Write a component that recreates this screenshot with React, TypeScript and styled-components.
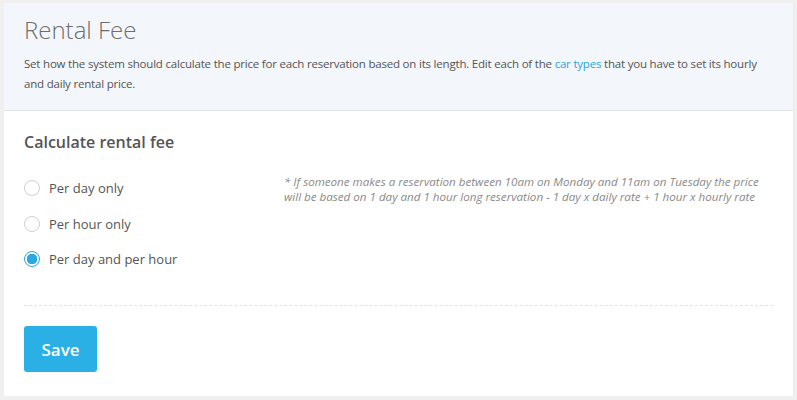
import React, { useState } from 'react';
import styled, { createGlobalStyle } from 'styled-components';

const GlobalStyle = createGlobalStyle`
  html, body {
    margin: 0;
    padding: 0;
    background: #f0f0f0;
  }
  body {
    font-family: 'Open Sans', 'Noto Sans', sans-serif;
    color: #555555;
  }
  * { box-sizing: border-box; }
`;

const options = [
  { id: 'day', label: 'Per day only' },
  { id: 'hour', label: 'Per hour only' },
  { id: 'both', label: 'Per day and per hour' },
];

const App = () => {
  const [mode, setMode] = useState('both');

  return (
    <>
      <GlobalStyle />
      <Page>
        <Card>
          <Header>
            <Title>Rental Fee</Title>
            <Description>
              Set how the system should calculate the price for each reservation based on its length. Edit each of
              the <Link href='#'>car types</Link> that you have to set its hourly and daily rental price.
            </Description>
          </Header>
          <Body>
            <SectionTitle>Calculate rental fee</SectionTitle>
            <OptionsRow>
              <RadioList>
                {options.map((o) => (
                  <RadioLabel key={o.id} onClick={() => setMode(o.id)}>
                    <RadioCircle $checked={mode === o.id} />
                    {o.label}
                  </RadioLabel>
                ))}
              </RadioList>
              <Note>
                * If someone makes a reservation between 10am on Monday and 11am on Tuesday the price will be based on
                1 day and 1 hour long reservation - 1 day x daily rate + 1 hour x hourly rate
              </Note>
            </OptionsRow>
            <Divider />
            <SaveButton type='button'>Save</SaveButton>
          </Body>
        </Card>
      </Page>
    </>
  );
};

export default App;

const Page = styled.div`
  padding: 3px 3px 4px 4px;
`;

const Card = styled.div`
  background: #ffffff;
  border-right: 1px solid #e9e9e9;
`;

const Header = styled.div`
  background: #f3f6fa;
  border-bottom: 1px solid #e3e7ec;
  padding: 11px 20px 18px 20px;
  height: 108px;
`;

const Title = styled.h1`
  margin: 0;
  font-weight: 300;
  font-size: 24px;
  line-height: 32px;
  color: #6e6e6e;
`;

const Description = styled.p`
  margin: 8px 0 0 0;
  font-size: 11.5px;
  line-height: 20px;
  letter-spacing: -0.2px;
  color: #555555;
  max-width: 738px;
`;

const Link = styled.a`
  color: #1fa8e0;
  text-decoration: none;
`;

const Body = styled.div`
  padding: 19px 20px 24px 20px;
`;

const SectionTitle = styled.h2`
  margin: 0;
  font-weight: 600;
  font-size: 16px;
  line-height: 24px;
  color: #555555;
`;

const OptionsRow = styled.div`
  display: flex;
  margin-top: 24px;
`;

const RadioList = styled.div`
  display: flex;
  flex-direction: column;
  gap: 15.5px;
  width: 260px;
`;

const RadioLabel = styled.label`
  display: flex;
  align-items: center;
  gap: 9px;
  font-size: 13px;
  line-height: 20px;
  color: #555555;
  cursor: pointer;
`;

const RadioCircle = styled.span<{ $checked: boolean }>`
  width: 16px;
  height: 16px;
  border-radius: 50%;
  border: 1px solid ${(p) => (p.$checked ? '#2aa9e3' : '#cfcfcf')};
  background: ${(p) => (p.$checked ? 'radial-gradient(circle, #2aa9e3 0 5px, #ffffff 5.5px)' : '#ffffff')};
  flex: 0 0 16px;
`;

const Note = styled.p`
  margin: -4px 0 0 0;
  font-size: 11.6px;
  line-height: 15px;
  font-style: italic;
  color: #8a8a8a;
  width: 485px;
`;

const Divider = styled.div`
  margin-top: 36px;
  border-top: 1px dashed #e3e3e3;
`;

const SaveButton = styled.button`
  margin-top: 20px;
  width: 73px;
  height: 46px;
  border: none;
  border-radius: 3px;
  background: #2bb0e6;
  color: #ffffff;
  font-family: 'Open Sans', sans-serif;
  font-weight: 600;
  font-size: 17px;
  cursor: pointer;
`;
